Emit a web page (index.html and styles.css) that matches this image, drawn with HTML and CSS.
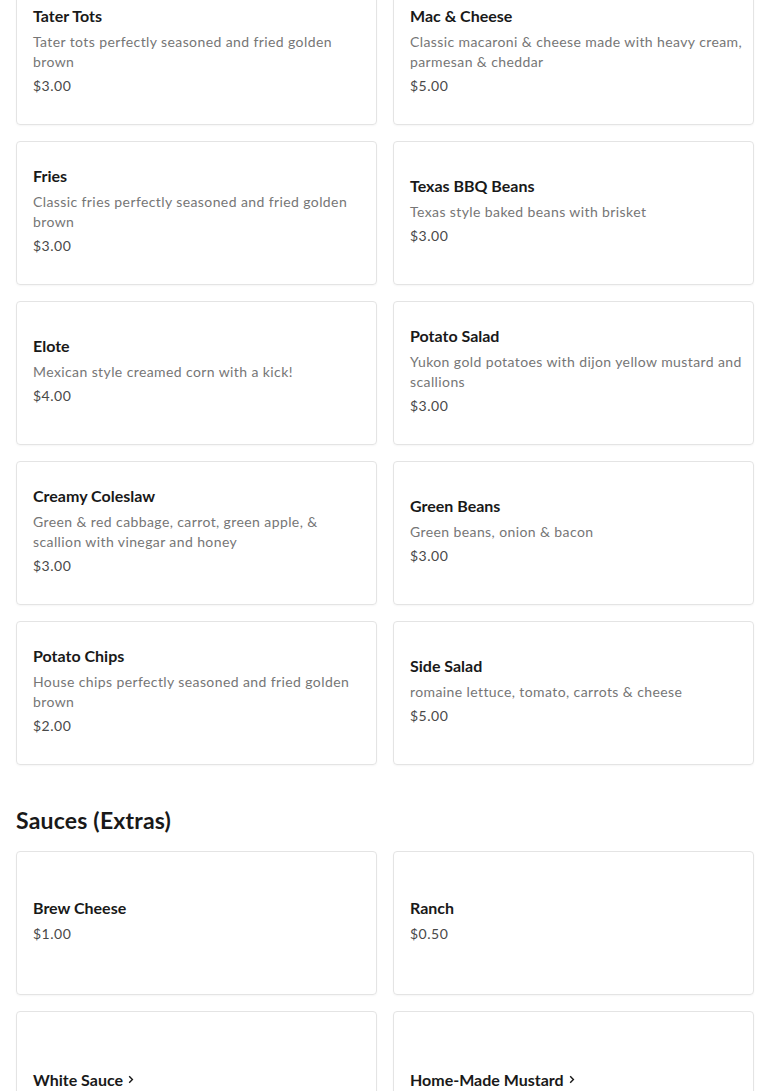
FILE: index.html
```html
<!DOCTYPE html>
<html>
<head>
<meta charset="utf-8">
<link rel="stylesheet" href="styles.css">
</head>
<body>
<main class="menu">
  <section class="grid">
    <div class="card"><div class="body"><div class="title">Tater Tots</div><div class="desc">Tater tots perfectly seasoned and fried golden brown</div><div class="price">$3.00</div></div></div>
    <div class="card"><div class="body"><div class="title">Mac &amp; Cheese</div><div class="desc">Classic macaroni &amp; cheese made with heavy cream, parmesan &amp; cheddar</div><div class="price">$5.00</div></div></div>
    <div class="card"><div class="body"><div class="title">Fries</div><div class="desc">Classic fries perfectly seasoned and fried golden brown</div><div class="price">$3.00</div></div></div>
    <div class="card"><div class="body"><div class="title">Texas BBQ Beans</div><div class="desc">Texas style baked beans with brisket</div><div class="price">$3.00</div></div></div>
    <div class="card"><div class="body"><div class="title">Elote</div><div class="desc">Mexican style creamed corn with a kick!</div><div class="price">$4.00</div></div></div>
    <div class="card"><div class="body"><div class="title">Potato Salad</div><div class="desc">Yukon gold potatoes with dijon yellow mustard and scallions</div><div class="price">$3.00</div></div></div>
    <div class="card"><div class="body"><div class="title">Creamy Coleslaw</div><div class="desc">Green &amp; red cabbage, carrot, green apple, &amp; scallion with vinegar and honey</div><div class="price">$3.00</div></div></div>
    <div class="card"><div class="body"><div class="title">Green Beans</div><div class="desc">Green beans, onion &amp; bacon</div><div class="price">$3.00</div></div></div>
    <div class="card"><div class="body"><div class="title">Potato Chips</div><div class="desc">House chips perfectly seasoned and fried golden brown</div><div class="price">$2.00</div></div></div>
    <div class="card"><div class="body"><div class="title">Side Salad</div><div class="desc">romaine lettuce, tomato, carrots &amp; cheese</div><div class="price">$5.00</div></div></div>
  </section>
  <h2 class="heading">Sauces (Extras)</h2>
  <section class="grid">
    <div class="card"><div class="body"><div class="title">Brew Cheese</div><div class="price">$1.00</div></div></div>
    <div class="card"><div class="body"><div class="title">Ranch</div><div class="price">$0.50</div></div></div>
    <div class="card card-link"><div class="body"><div class="title">White Sauce <svg class="chev" width="6" height="9" viewBox="0 0 6 9"><path d="M1.2 1.2 L4.4 4.5 L1.2 7.8" fill="none" stroke="#191919" stroke-width="1.4"/></svg></div></div></div>
    <div class="card card-link"><div class="body"><div class="title">Home-Made Mustard <svg class="chev" width="6" height="9" viewBox="0 0 6 9"><path d="M1.2 1.2 L4.4 4.5 L1.2 7.8" fill="none" stroke="#191919" stroke-width="1.4"/></svg></div></div></div>
  </section>
</main>
</body>
</html>
```
FILE: styles.css
```css
html, body {
  margin: 0;
  padding: 0;
  background: #ffffff;
}
body {
  font-family: Lato, "Liberation Sans", sans-serif;
  color: #191919;
}
.menu {
  margin-top: -19px;
  padding: 0 16px 40px;
}
.grid {
  display: grid;
  grid-template-columns: 1fr 1fr;
  gap: 16px;
}
.card {
  box-sizing: border-box;
  height: 144px;
  border: 1px solid #e4e4e4;
  border-radius: 4px;
  box-shadow: 0 1px 2px rgba(0,0,0,0.04);
  display: flex;
  align-items: center;
  padding: 0 8px 5px 16px;
}
.card-link {
  padding-bottom: 7px;
}
.body {
  display: flex;
  flex-direction: column;
}
.title {
  font-size: 16px;
  font-weight: 700;
  line-height: 22px;
  color: #191919;
  display: flex;
  align-items: center;
  gap: 5px;
  margin-bottom: 5px;
}
.body .title:last-child {
  margin-bottom: 0;
}
.desc {
  font-size: 14px;
  line-height: 20px;
  color: #767676;
  letter-spacing: 0.4px;
  margin-bottom: 4px;
}
.price {
  font-size: 14px;
  line-height: 20px;
  color: #494949;
  letter-spacing: 0.5px;
}
.heading {
  margin: 40px 0 16px;
  font-size: 23px;
  line-height: 30px;
  font-weight: 700;
  letter-spacing: 0.2px;
  color: #191919;
}
```
